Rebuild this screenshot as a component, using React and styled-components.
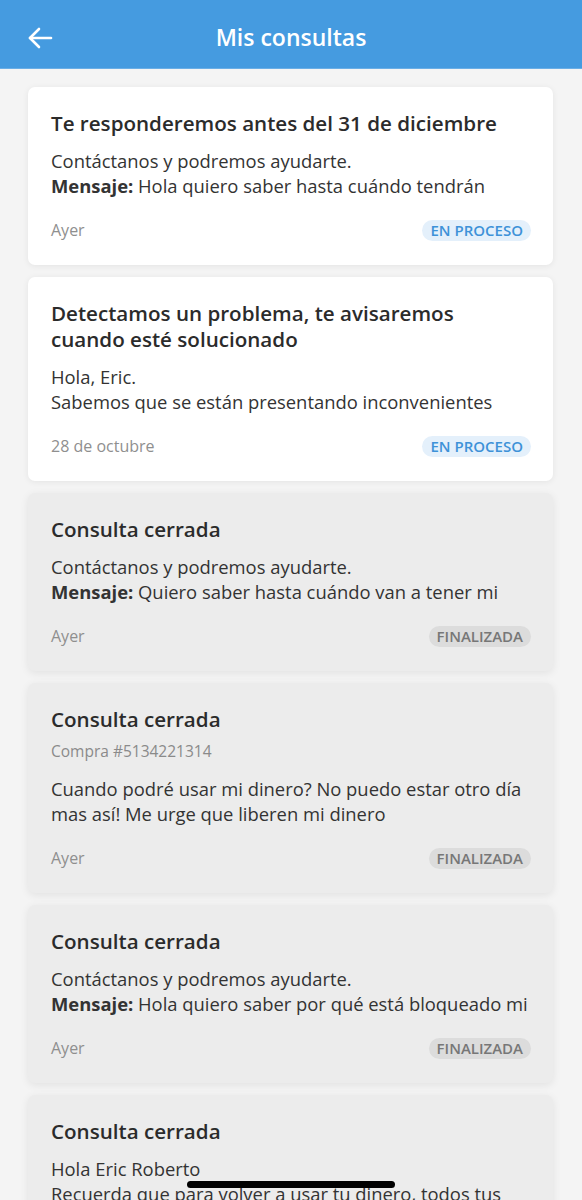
import React from "react";
import styled, { createGlobalStyle } from "styled-components";

const Global = createGlobalStyle`
  html, body { margin: 0; padding: 0; background: #f4f4f4; }
  body { font-family: "Open Sans", "Lato", sans-serif; -webkit-font-smoothing: antialiased; }
  * { box-sizing: border-box; }
`;

const Page = styled.div`
  height: 1200px;
  overflow: hidden;
  background: #f4f4f4;
`;

const Header = styled.header`
  height: 69px;
  background: #459be0;
  display: grid;
  grid-template-columns: 80px 1fr 80px;
  align-items: center;
  border-bottom: 1px solid #6aaee6;
`;

const BackButton = styled.button`
  border: 0;
  background: none;
  padding: 7px 0 0 27px;
  height: 100%;
  display: flex;
  align-items: center;
  color: #fff;
  cursor: pointer;
`;

const Title = styled.h1`
  margin: 0;
  padding-top: 6px;
  text-align: center;
  color: #fff;
  font-size: 23px;
  font-weight: 600;
`;

const List = styled.main`
  padding: 18px 29px 0 28px;
  display: flex;
  flex-direction: column;
  gap: 12px;
`;

const Card = styled.article`
  background: ${(p) => (p.$closed ? "#ececec" : "#ffffff")};
  border-radius: 7px;
  box-shadow: ${(p) =>
    p.$closed
      ? "0 2px 8px rgba(0,0,0,0.08)"
      : "0 1px 6px rgba(0,0,0,0.07)"};
  padding: 23px 22px 24px 23px;
  display: flex;
  flex-direction: column;
`;

const CardTitle = styled.h2`
  margin: 0;
  font-size: 20.6px;
  line-height: 26px;
  font-weight: 600;
  color: #2b2b2b;
`;

const Meta = styled.div`
  margin-top: 9px;
  font-size: 15.5px;
  line-height: 20px;
  color: #8a8a8a;
`;

const Body = styled.p`
  margin: ${(p) => (p.$spaced ? "15px" : "12px")} 0 0;
  font-size: 18.4px;
  line-height: 25px;
  color: #333;
`;

const Strong = styled.strong`
  font-weight: 700;
`;

const Footer = styled.div`
  margin-top: 21px;
  height: 22px;
  display: flex;
  align-items: center;
  justify-content: space-between;
`;

const DateText = styled.span`
  font-size: 16px;
  color: #8f8f8f;
`;

const Badge = styled.span`
  height: 21px;
  display: inline-flex;
  align-items: center;
  padding: 0 8px;
  border-radius: 11px;
  font-size: 15px;
  font-weight: 600;
  background: ${(p) => (p.$done ? "#dcdcdc" : "#e4f0fb")};
  color: ${(p) => (p.$done ? "#777777" : "#3e92d8")};
`;

const HomeBar = styled.div`
  position: fixed;
  left: 187px;
  top: 1181px;
  width: 208px;
  height: 7px;
  border-radius: 4px;
  background: #000;
`;

const items = [
  {
    title: "Te responderemos antes del 31 de diciembre",
    lines: ["Contáctanos y podremos ayudarte."],
    msg: "Hola quiero saber hasta cuándo tendrán",
    date: "Ayer",
  },
  {
    title: "Detectamos un problema, te avisaremos cuando esté solucionado",
    lines: ["Hola, Eric.", "Sabemos que se están presentando inconvenientes"],
    date: "28 de octubre",
  },
  {
    closed: true,
    title: "Consulta cerrada",
    lines: ["Contáctanos y podremos ayudarte."],
    msg: "Quiero saber hasta cuándo van a tener mi",
    date: "Ayer",
  },
  {
    closed: true,
    title: "Consulta cerrada",
    meta: "Compra #5134221314",
    lines: ["Cuando podré usar mi dinero? No puedo estar otro día mas así! Me urge que liberen mi dinero"],
    date: "Ayer",
  },
  {
    closed: true,
    title: "Consulta cerrada",
    lines: ["Contáctanos y podremos ayudarte."],
    msg: "Hola quiero saber por qué está bloqueado mi",
    date: "Ayer",
  },
  {
    closed: true,
    title: "Consulta cerrada",
    lines: ["Hola Eric Roberto", "Recuerda que para volver a usar tu dinero, todos tus"],
    date: "Ayer",
  },
];

export default function App() {
  return (
    <Page>
      <Global />
      <Header>
        <BackButton aria-label="Volver">
          <svg width="26" height="24" viewBox="0 0 26 24" fill="none" stroke="#fff" strokeWidth="2.6" strokeLinecap="round" strokeLinejoin="round">
            <path d="M24 12H3" />
            <path d="M12 3L3 12l9 9" />
          </svg>
        </BackButton>
        <Title>Mis consultas</Title>
        <span />
      </Header>
      <List>
        {items.map((it, i) => (
          <Card key={i} $closed={it.closed}>
            <CardTitle>{it.title}</CardTitle>
            {it.meta && <Meta>{it.meta}</Meta>}
            <Body $spaced={!!it.meta}>
              {it.lines.map((l, j) => (
                <React.Fragment key={j}>
                  {j > 0 && <br />}
                  {l}
                </React.Fragment>
              ))}
              {it.msg && (
                <>
                  <br />
                  <Strong>Mensaje:</Strong> {it.msg}
                </>
              )}
            </Body>
            <Footer>
              <DateText>{it.date}</DateText>
              <Badge $done={it.closed}>{it.closed ? "FINALIZADA" : "EN PROCESO"}</Badge>
            </Footer>
          </Card>
        ))}
      </List>
      <HomeBar />
    </Page>
  );
}
